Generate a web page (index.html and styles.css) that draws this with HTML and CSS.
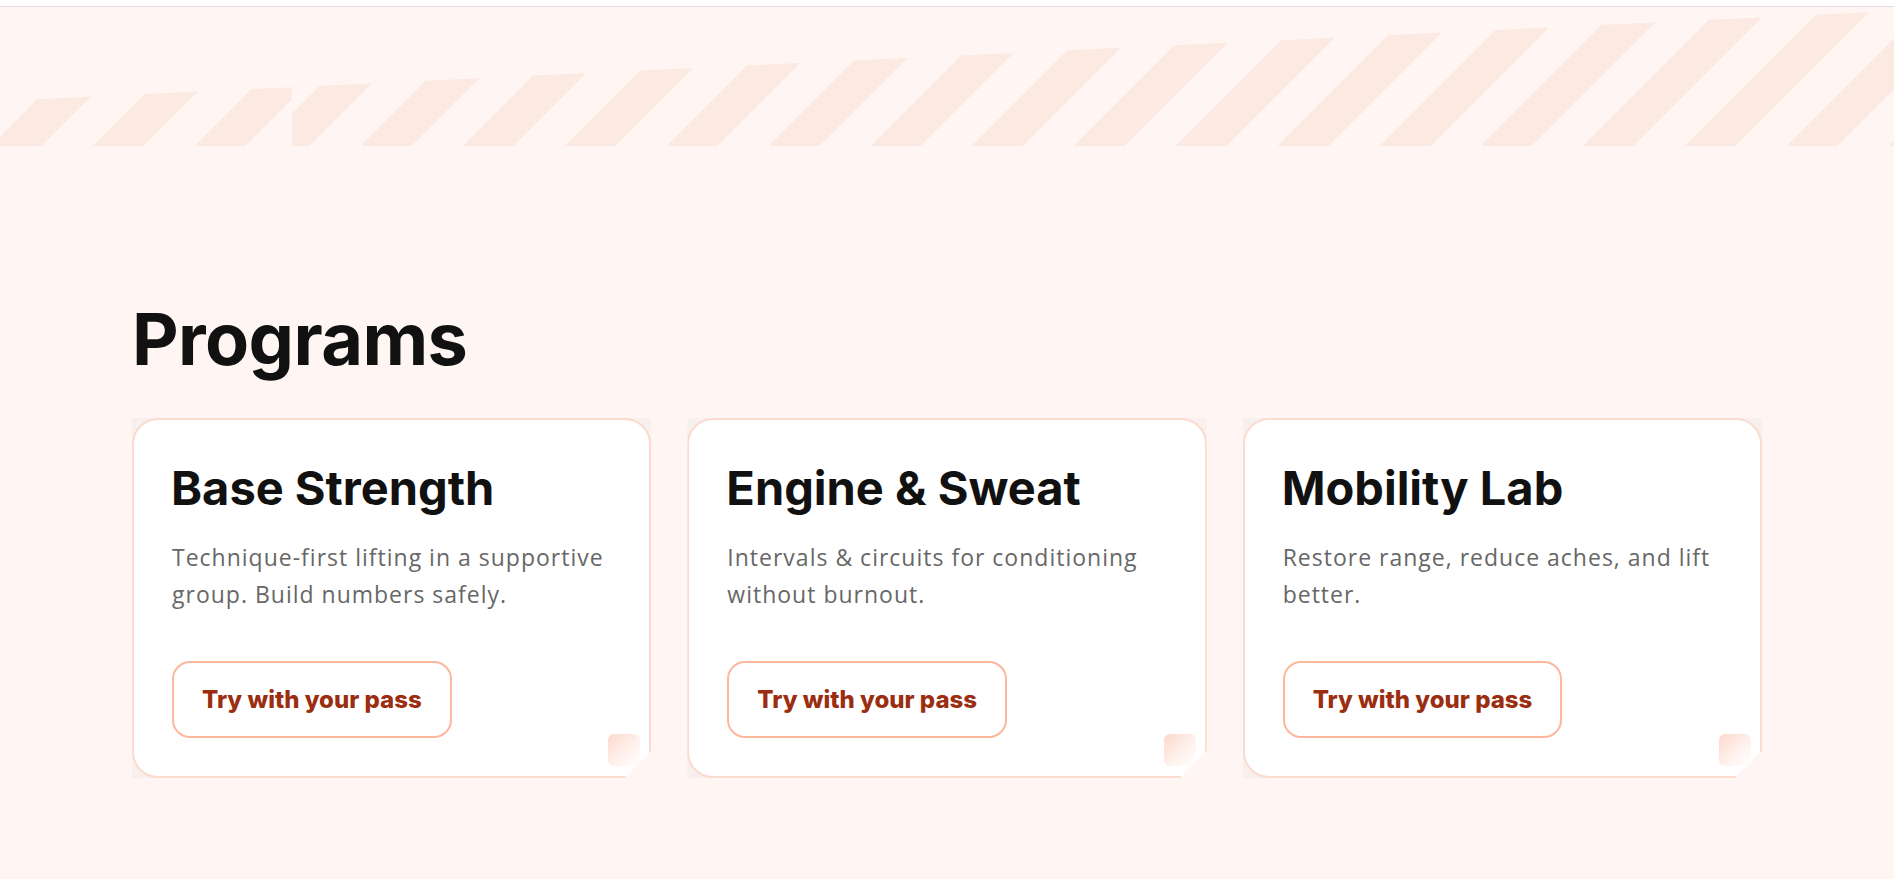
FILE: index.html
```html
<!DOCTYPE html>
<html lang="en">
<head>
<meta charset="utf-8">
<title>Programs</title>
<link rel="stylesheet" href="styles.css">
</head>
<body>
<div class="topbar"></div>
<div class="band">
  <div class="band-left"></div>
  <div class="band-right"></div>
</div>
<main class="programs">
  <h2 class="programs-title">Programs</h2>
  <div class="grid">
    <article class="card">
      <div class="card-inner">
        <h3 class="card-title">Base Strength</h3>
        <p class="card-text">Technique-first lifting in a supportive group. Build numbers safely.</p>
        <a class="card-btn" href="#">Try with your pass</a>
      </div>
      <span class="fold"></span>
    </article>
    <article class="card">
      <div class="card-inner">
        <h3 class="card-title">Engine &amp; Sweat</h3>
        <p class="card-text">Intervals &amp; circuits for conditioning without burnout.</p>
        <a class="card-btn" href="#">Try with your pass</a>
      </div>
      <span class="fold"></span>
    </article>
    <article class="card">
      <div class="card-inner">
        <h3 class="card-title">Mobility Lab</h3>
        <p class="card-text">Restore range, reduce aches, and lift better.</p>
        <a class="card-btn" href="#">Try with your pass</a>
      </div>
      <span class="fold"></span>
    </article>
  </div>
</main>
</body>
</html>
```

FILE: styles.css
```css
* { box-sizing: border-box; }

html, body {
  margin: 0;
  padding: 0;
}

body {
  background: #fff6f3;
  font-family: "Open Sans", "Liberation Sans", sans-serif;
  color: #111;
}

.topbar {
  height: 7px;
  background: #ffffff;
  border-bottom: 1px solid #e1dedc;
}

.band {
  display: flex;
  height: 139px;
  clip-path: polygon(0 94px, 100% 4px, 100% 100%, 0 100%);
}

.band-left {
  flex: 0 0 292px;
  background: repeating-linear-gradient(135deg,
    transparent 0 19.8px,
    #fce9e2 19.8px 55.8px,
    transparent 55.8px 72px);
}

.band-right {
  flex: 1 1 auto;
  background: repeating-linear-gradient(135deg,
    transparent 0 3px,
    #fce9e2 3px 39px,
    transparent 39px 72px);
}

.programs {
  max-width: 1630px;
  margin: 0 auto;
  padding-top: 157px;
}

.programs-title {
  margin: 0 0 43px;
  font-family: "Inter", "Liberation Sans", sans-serif;
  font-weight: 700;
  font-size: 72px;
  line-height: 72px;
  letter-spacing: -0.6px;
  color: #111;
}

.grid {
  display: grid;
  grid-template-columns: repeat(3, 1fr);
  gap: 36px;
}

.card {
  position: relative;
  background: #f7f0ed;
  clip-path: polygon(0 0, 100% 0, 100% calc(100% - 27px), calc(100% - 27px) 100%, 0 100%);
}

.card-inner {
  display: flex;
  flex-direction: column;
  align-items: flex-start;
  height: 100%;
  padding: 38px;
  background: #ffffff;
  border: 2px solid #fcdacd;
  border-radius: 26px;
}

.card-title {
  margin: 0 0 0 -1px;
  font-family: "Inter", "Liberation Sans", sans-serif;
  font-weight: 700;
  font-size: 47px;
  line-height: 59px;
  letter-spacing: 0;
  color: #111;
}

.card-text {
  margin: 22px 0 48px;
  font-size: 23px;
  line-height: 37px;
  letter-spacing: 1px;
  color: #676767;
}

.card-btn {
  margin-top: auto;
  display: inline-block;
  padding: 22px 28px;
  border: 2px solid #fdb79d;
  border-radius: 18px;
  font-family: "Inter", "Liberation Sans", sans-serif;
  font-weight: 800;
  font-size: 24px;
  line-height: 29px;
  letter-spacing: 0;
  color: #9b2d11;
  text-decoration: none;
  background: #fff;
}

.fold {
  position: absolute;
  right: 11px;
  bottom: 12px;
  width: 32px;
  height: 32px;
  border-radius: 6px;
  background: linear-gradient(135deg, #fcd8cb 0%, #fff3ef 60%, #ffffff 100%);
}
```
